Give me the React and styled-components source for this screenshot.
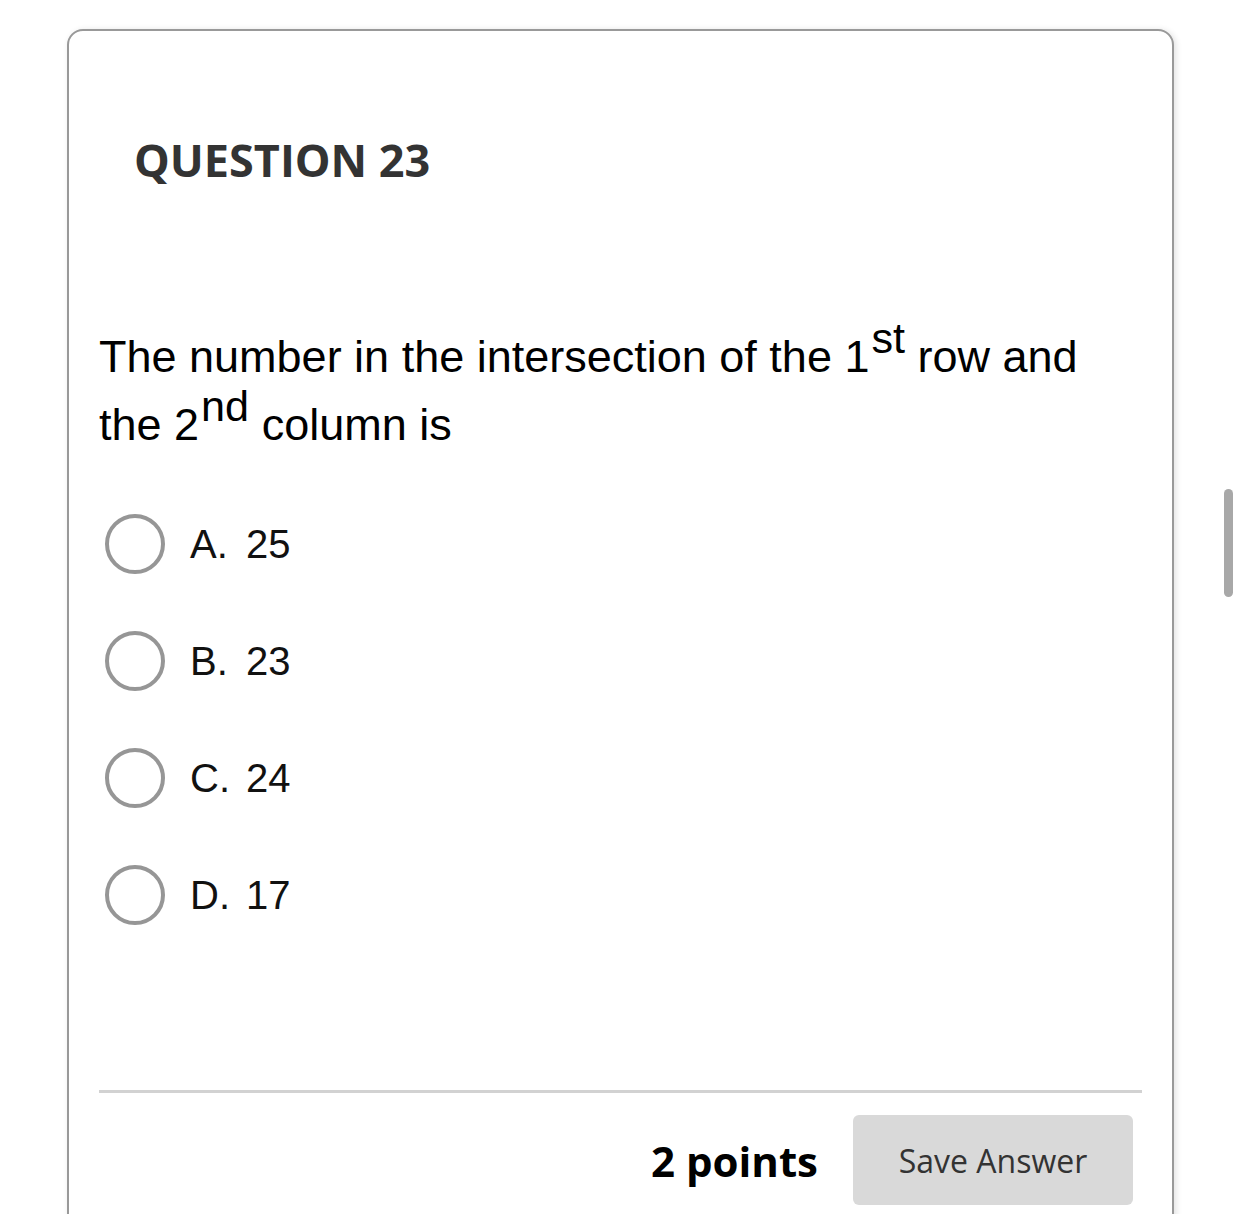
import React from 'react';
import styled, { createGlobalStyle } from 'styled-components';

const GlobalStyle = createGlobalStyle`
  html, body {
    margin: 0;
    padding: 0;
    background: #fff;
    height: 1214px;
    overflow: hidden;
  }
`;

const options = [
  { letter: 'A', value: '25' },
  { letter: 'B', value: '23' },
  { letter: 'C', value: '24' },
  { letter: 'D', value: '17' },
];

const App = () => {
  return (
    <>
      <GlobalStyle />
      <Page>
        <Card>
          <Title>QUESTION 23</Title>
          <Prompt>
            The number in the intersection of the 1<sup>st</sup> row and the 2
            <sup>nd</sup> column is
          </Prompt>
          <OptionList>
            {options.map((opt) => (
              <Option key={opt.letter}>
                <Radio />
                <OptionText>
                  <span className="letter">{opt.letter}.</span>
                  {opt.value}
                </OptionText>
              </Option>
            ))}
          </OptionList>
          <Divider />
          <Footer>
            <Points>2 points</Points>
            <SaveButton>Save Answer</SaveButton>
          </Footer>
        </Card>
      </Page>
      <Scrollbar />
    </>
  );
};

const Page = styled.div`
  padding: 29px 0 0 67px;
`;

const Card = styled.div`
  width: 1107px;
  min-height: 1300px;
  box-sizing: border-box;
  border: 2px solid #999;
  border-radius: 16px;
  box-shadow: 2px 1px 6px rgba(0, 0, 0, 0.12);
  padding: 99px 30px 0;
  background: #fff;
`;

const Title = styled.h2`
  margin: 0 0 0 35px;
  font-family: 'Open Sans', sans-serif;
  font-weight: 700;
  font-size: 45px;
  line-height: 60px;
  color: #333;
`;

const Prompt = styled.p`
  margin: 133px 0 0 0;
  font-family: 'Liberation Sans', Arial, sans-serif;
  font-size: 45px;
  line-height: 68px;
  color: #000;
  max-width: 1020px;
  sup {
    font-size: 0.96em;
    vertical-align: 19px;
    line-height: 0;
    margin-left: 2px;
  }
`;

const OptionList = styled.div`
  display: flex;
  flex-direction: column;
  gap: 57px;
  margin-top: 55px;
  padding-left: 6px;
`;

const Option = styled.label`
  display: flex;
  align-items: center;
  gap: 25px;
  height: 60px;
`;

const Radio = styled.span`
  width: 60px;
  height: 60px;
  box-sizing: border-box;
  border: 4px solid #969696;
  border-radius: 50%;
  flex-shrink: 0;
`;

const OptionText = styled.span`
  font-family: 'Liberation Sans', Arial, sans-serif;
  font-size: 40px;
  color: #111;
  .letter {
    display: inline-block;
    width: 56px;
  }
`;

const Divider = styled.hr`
  margin: 165px 0 0 0;
  border: 0;
  height: 3px;
  background: #d2d2d2;
`;

const Footer = styled.div`
  display: flex;
  justify-content: flex-end;
  align-items: center;
  gap: 35px;
  padding: 22px 9px 0 0;
`;

const Points = styled.span`
  font-family: 'Open Sans', sans-serif;
  font-weight: 700;
  font-size: 42px;
  color: #000;
`;

const SaveButton = styled.button`
  width: 280px;
  height: 90px;
  border: 0;
  border-radius: 6px;
  background: #d9d9d9;
  font-family: 'Open Sans', sans-serif;
  font-size: 32px;
  color: #333;
`;

const Scrollbar = styled.div`
  position: fixed;
  left: 1224px;
  top: 489px;
  width: 9px;
  height: 108px;
  border-radius: 5px;
  background: #a8a8a8;
`;

export default App;
